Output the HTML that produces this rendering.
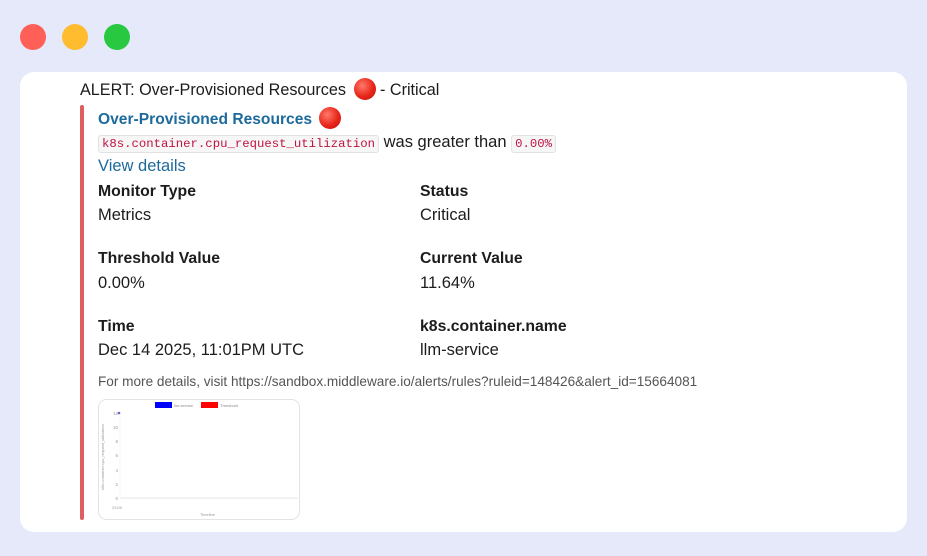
<!DOCTYPE html>
<html><head><meta charset="utf-8"><style>
*{margin:0;padding:0;box-sizing:border-box}
body{width:927px;height:556px;background:#e5e9fa;font-family:"Liberation Sans",sans-serif;color:#1d1c1d;position:relative;overflow:hidden}
.dot{position:absolute;top:24px;width:26px;height:26px;border-radius:50%}
.card{position:absolute;left:20px;top:72px;width:887px;height:460px;background:#fff;border-radius:14px}
.a{position:absolute;white-space:nowrap}
.bar{position:absolute;left:80px;top:105px;width:4px;height:415px;background:#dd5f5f;border-radius:2px}
.emo{display:inline-block;width:22px;height:22px;border-radius:50%;background:radial-gradient(circle at 38% 35%,#ff7a6a,#e8261a 55%,#b8130b);vertical-align:-5px;margin-left:3px}
code{font-family:"Liberation Mono",monospace;font-size:12.3px;color:#c01343;background:#f6f6f6;border:1px solid #e2e2e2;border-radius:3px;padding:1px 3px}
.b{font-weight:bold;font-size:15.8px}
.v{font-size:16.5px}
</style></head><body>
<div class="dot" style="left:20px;background:#fe5f57"></div>
<div class="dot" style="left:62px;background:#febc2e"></div>
<div class="dot" style="left:104px;background:#28c840"></div>
<div class="card"></div>
<div class="bar"></div>
<div class="a" style="left:80px;top:78px;font-size:16.2px">ALERT: Over-Provisioned Resources <span class="emo"></span> - Critical</div>
<div class="a" style="left:98px;top:107px;font-size:15.6px;font-weight:bold;color:#1d6a9c">Over-Provisioned Resources <span class="emo"></span></div>
<div class="a" style="left:98px;top:133px;font-size:16.5px"><code>k8s.container.cpu_request_utilization</code> was greater than <code>0.00%</code></div>
<div class="a" style="left:98px;top:157px;font-size:16.5px;color:#1d6a9c">View details</div>
<div class="a b" style="left:98px;top:183px">Monitor Type</div>
<div class="a v" style="left:98px;top:206px">Metrics</div>
<div class="a b" style="left:420px;top:183px">Status</div>
<div class="a v" style="left:420px;top:206px">Critical</div>
<div class="a b" style="left:98px;top:250px">Threshold Value</div>
<div class="a v" style="left:98px;top:274px">0.00%</div>
<div class="a b" style="left:420px;top:250px">Current Value</div>
<div class="a v" style="left:420px;top:274px">11.64%</div>
<div class="a b" style="left:98px;top:318px">Time</div>
<div class="a v" style="left:98px;top:341px">Dec 14 2025, 11:01PM UTC</div>
<div class="a b" style="left:420px;top:318px">k8s.container.name</div>
<div class="a v" style="left:420px;top:341px">llm-service</div>
<div class="a" style="left:98px;top:374px;font-size:13.6px;color:#555">For more details, visit https://sandbox.middleware.io/alerts/rules?ruleid=148426&amp;alert_id=15664081</div>
<svg class="a" style="left:98px;top:399px" width="202" height="121" viewBox="0 0 202 121">
<rect x="0.5" y="0.5" width="201" height="120" rx="8" fill="#fff" stroke="#e3e3e3"/>
<rect x="57" y="3" width="17" height="6" fill="#0000ff"/><text x="76" y="8" font-size="4" fill="#888">llm-service</text>
<rect x="103" y="3" width="17" height="6" fill="#ff0000"/><text x="122" y="8" font-size="4" fill="#888">Threshold</text>
<g font-size="4.5" fill="#999" text-anchor="end">
<text x="20" y="16">12</text><text x="20" y="30">10</text><text x="20" y="44">8</text><text x="20" y="58">6</text><text x="20" y="73">4</text><text x="20" y="87">2</text><text x="20" y="101">0</text></g>
<line x1="22" y1="99" x2="200" y2="99" stroke="#ccc" stroke-width="0.6"/>
<line x1="22" y1="14" x2="22" y2="99" stroke="#eee" stroke-width="0.6"/>
<circle cx="21" cy="14" r="1.3" fill="#6666cc"/>
<text x="14" y="110" font-size="4" fill="#999">23:00</text>
<text x="102" y="117" font-size="4" fill="#999">Timeline</text>
<text transform="translate(6,58) rotate(-90)" font-size="4" fill="#999" text-anchor="middle">k8s.container.cpu_request_utilization</text>
</svg>
</body></html>
